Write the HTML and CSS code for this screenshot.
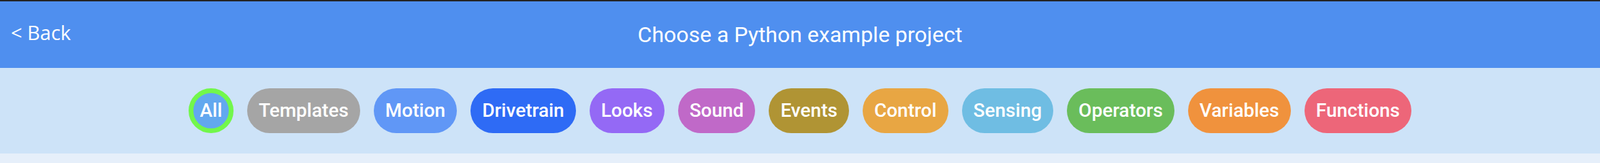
FILE: index.html
```html
<!DOCTYPE html>
<html lang="en">
<head>
<meta charset="utf-8">
<title>Choose a Python example project</title>
<link rel="stylesheet" href="styles.css">
</head>
<body>
<div class="app">
  <header class="topbar">
    <button class="back">&lt; Back</button>
    <h1 class="title">Choose a Python example project</h1>
  </header>
  <nav class="filters">
    <button class="pill pill-all selected">All</button>
    <button class="pill pill-templates">Templates</button>
    <button class="pill pill-motion">Motion</button>
    <button class="pill pill-drivetrain">Drivetrain</button>
    <button class="pill pill-looks">Looks</button>
    <button class="pill pill-sound">Sound</button>
    <button class="pill pill-events">Events</button>
    <button class="pill pill-control">Control</button>
    <button class="pill pill-sensing">Sensing</button>
    <button class="pill pill-operators">Operators</button>
    <button class="pill pill-variables">Variables</button>
    <button class="pill pill-functions">Functions</button>
  </nav>
  <div class="content"></div>
</div>
</body>
</html>
```

FILE: styles.css
```css
html, body {
  margin: 0;
  padding: 0;
  background: #e6effa;
}

.app {
  width: 2350px;
  height: 230px;
  display: flex;
  flex-direction: column;
  border-top: 2px solid #242424;
  box-sizing: border-box;
}

.topbar {
  height: 98px;
  background: #4f8fef;
  display: flex;
  align-items: center;
  justify-content: center;
  position: relative;
}

.back {
  position: absolute;
  left: 16px;
  top: 0;
  bottom: 0;
  margin: auto 0;
  height: 40px;
  padding: 0;
  border: none;
  background: none;
  color: #ffffff;
  font-family: "Open Sans", "Noto Sans", sans-serif;
  font-size: 29px;
  line-height: 40px;
  cursor: pointer;
  transform: translateY(-3px);
}

.title {
  margin: 0;
  color: #ffffff;
  font-family: Roboto, "Liberation Sans", sans-serif;
  font-weight: 400;
  font-size: 32px;
  line-height: 40px;
}

.filters {
  height: 126px;
  background: #cde3f8;
  display: flex;
  align-items: center;
  justify-content: center;
  gap: 20px;
}

.pill {
  height: 66px;
  box-sizing: border-box;
  padding: 0 17px;
  border: none;
  border-radius: 33px;
  color: #ffffff;
  font-family: Roboto, "Liberation Sans", sans-serif;
  font-weight: 500;
  font-size: 28px;
  line-height: 66px;
  display: inline-flex;
  align-items: center;
  justify-content: center;
  cursor: pointer;
}

.pill-all {
  width: 66px;
  padding: 0;
  background: #62a8ef;
}

.pill-all.selected {
  border: 7px solid #72f74b;
}

.pill-templates { background: #a5a5a5; }
.pill-motion { background: #6097f6; }
.pill-drivetrain { background: #2e6bf5; }
.pill-looks { background: #9469f5; }
.pill-sound { background: #c069c8; }
.pill-events { background: #b09434; }
.pill-control { background: #e8a643; }
.pill-sensing { background: #6fbde3; }
.pill-operators { background: #6abd5b; }
.pill-variables { background: #f0923d; }
.pill-functions { background: #ed6679; }

.content {
  flex: 1;
  background: #e6effa;
}
```
